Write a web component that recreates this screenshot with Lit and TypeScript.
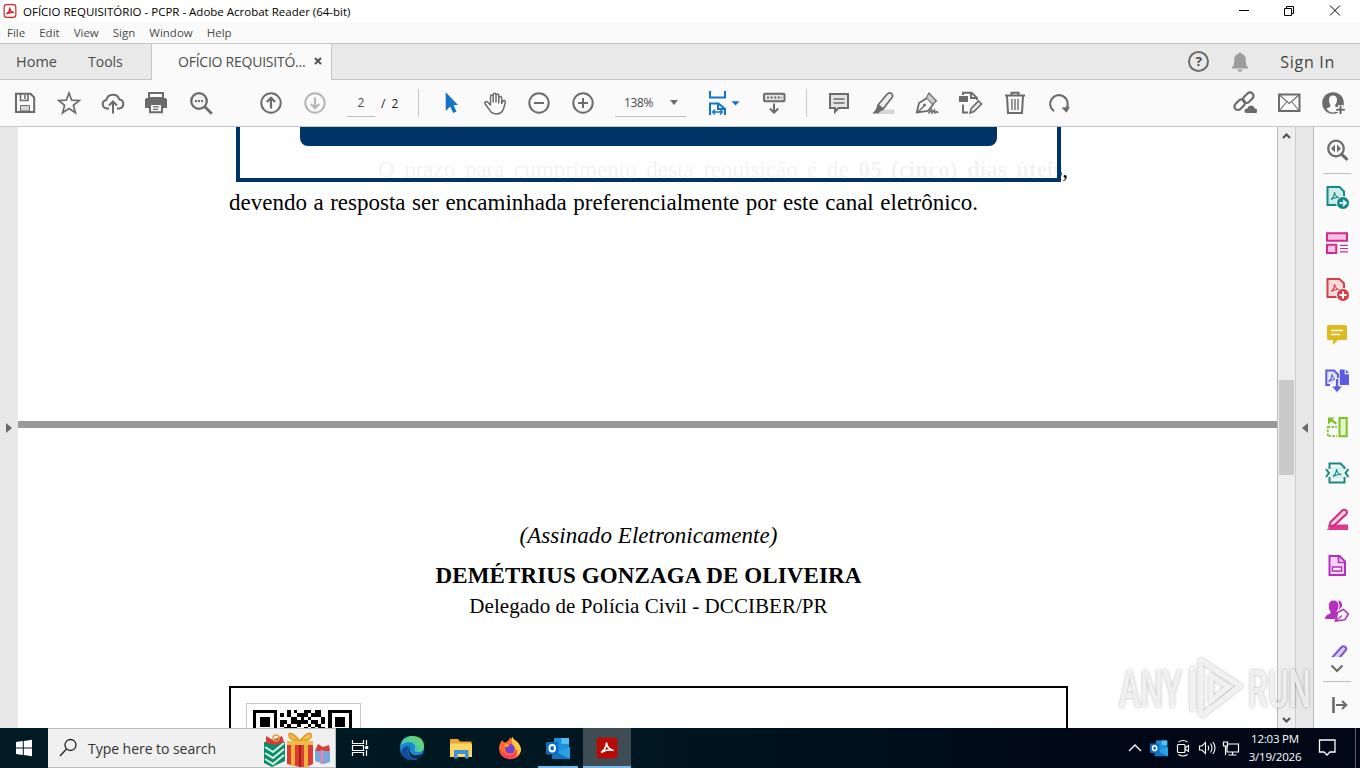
import { LitElement, html, svg, css, SVGTemplateResult } from 'lit';
import { customElement, property } from 'lit/decorators.js';

const G = '#6b6b6b';
const BLUE = '#1473c8';

const pdfMark = (x: number, y: number, color: string) => svg`
  <path d="M0 7.5C2 6 3.500 2.800 3.500 0c.3 3 2 5 4.800 5.600C5.500 5.200 2.500 6 0 7.500z"
    transform="translate(${x} ${y})" fill="none" stroke=${color} stroke-width="1.1"/>`;

// all glyphs are drawn on a 24x24 grid unless the <x-icon> gives another width
const ICONS: Record<string, SVGTemplateResult> = {
  save: svg`<path d="M3 2.800h14.500l3.700 3.700v14.400H3z" fill="none" stroke=${G} stroke-width="2"/>
    <path d="M7.500 3v6.500h7.500V3" fill="none" stroke=${G} stroke-width="1.6"/><path d="M12 4v4" stroke=${G} stroke-width="1.6"/>
    <path d="M7.500 20v-5.500h9V20z" fill="#d8d8d8" stroke=${G} stroke-width="1"/>`,
  star: svg`<path d="M12 2l2.700 7.200 7.700.3-6 4.800 2 7.500-6.400-4.300-6.400 4.300 2-7.500-6-4.800 7.700-.3z" fill="none" stroke=${G} stroke-width="1.7"/>`,
  cloud: svg`<path d="M8 17.500H5.500A4.300 4.300 0 0 1 5.300 9a6.800 6.800 0 0 1 13.100-.4A4.500 4.500 0 0 1 18.500 17.500H16" fill="none" stroke=${G} stroke-width="2"/>
    <path d="M12 22.500V11M8 14.500l4-4 4 4" fill="none" stroke=${G} stroke-width="2"/>`,
  print: svg`<path d="M4 2h14v5H4z" fill="#fafafa" stroke=${G} stroke-width="2"/>
    <path d="M0 8.500q0-1.500 1.500-1.500h19q1.500 0 1.500 1.500V17H0z" fill=${G}/>
    <path d="M5 13h12v8.300H5z" fill="#fafafa" stroke=${G} stroke-width="2"/><path d="M8 15.800h6M8 18.400h5" stroke=${G} stroke-width="1.2"/>`,
  search: svg`<circle cx="10" cy="10" r="7.800" fill="#f2f2f2" stroke=${G} stroke-width="2.3"/><path d="M15.800 15.800l7 7" stroke=${G} stroke-width="2.800"/>
    <path d="M6 9h2v2H6zM9 9h2v2H9zM12 9h2v2h-2z" fill=${G}/>`,
  up: svg`<circle cx="12" cy="12" r="9.700" fill="none" stroke=${G} stroke-width="2"/><path d="M12 17.500V7M7.800 11L12 6.800l4.200 4.200" fill="none" stroke=${G} stroke-width="2.2"/>`,
  down: svg`<circle cx="12" cy="12" r="9.700" fill="none" stroke="#b5b5b5" stroke-width="2"/><path d="M12 6.500V17M7.800 13l4.200 4.200 4.200-4.200" fill="none" stroke="#b5b5b5" stroke-width="2.2"/>`,
  cursor: svg`<path d="M6.700 1.300L19 14h-4.500l3 6.400-3.300 1.500-3-6.300-4.500 4.300z" fill=${BLUE}/>`,
  hand: svg`<path d="M7.500 14V5.500c0-2 2.700-2 2.700 0V11V3.800c0-2 2.800-2 2.800 0V11V4.500c0-2 2.800-2 2.800 0V12V7c0-1.900 2.900-1.900 2.900 0v5.500l.9-2c1.200-1.800 3.200-1 2.700 1L20.800 17c-1 4-3.800 6-7.600 6-4.200 0-5.700-2-7.200-4.800L2 12.800c-.9-1.700 1.300-3 2.800-1.500z" fill="#fafafa" stroke=${G} stroke-width="1.5" stroke-linejoin="round"/>`,
  minus: svg`<circle cx="12" cy="12" r="9.700" fill="none" stroke=${G} stroke-width="2"/><path d="M7 12h10" stroke=${G} stroke-width="2"/>`,
  plus: svg`<circle cx="12" cy="12" r="9.700" fill="none" stroke=${G} stroke-width="2"/><path d="M7 12h10M12 7v10" stroke=${G} stroke-width="2"/>`,
  fit: svg`<path d="M5 0v6.500h15V0M5 24V12.500h8.500L20 18v6M13 12.500V18h6" fill="none" stroke=${BLUE} stroke-width="2"/>
    <path d="M7.500 21h10M10 18.500L7.500 21l2.500 2.500M15 18.500l2.500 2.500-2.500 2.500" fill="none" stroke=${BLUE} stroke-width="1.3"/>
    <path d="M26.500 10.300h8l-4 4.200z" fill=${BLUE}/>`,
  keys: svg`<rect x="2" y="2.800" width="20.500" height="7.400" rx="1" fill="#e2e2e2" stroke=${G} stroke-width="2"/>
    <path d="M5 6.500h15" stroke=${G} stroke-width="2" stroke-dasharray="2 1.600"/><path d="M12 12.500v9M7.800 17.500l4.200 4.200 4.200-4.200" fill="none" stroke=${G} stroke-width="2"/>`,
  comment: svg`<path d="M3 3h18v14h-9.500L8 20.800V17H3z" fill="#e4e4e4" stroke=${G} stroke-width="2"/><path d="M6.500 8h11M6.500 12h11" stroke=${G} stroke-width="1.500"/>`,
  marker: svg`<path d="M10 18.500h13.500V23H7z" fill="#d6d6d6"/><path d="M7 14L16 3.300q2.500-2.500 4.500-.7t.3 4.200L12 18z" fill="#ececec" stroke=${G} stroke-width="1.700"/>
    <path d="M6.500 14l6 5-3.500 1.500-1.500 2H1.300l3.500-4z" fill=${G}/>`,
  pen: svg`<path d="M1.800 21.500L4 12l8-5 6 6.500-5 6.500z" fill="none" stroke=${G} stroke-width="1.800"/>
    <path d="M11.500 6.500L14 2l7.500 8-3.500 3" fill="#ccc" stroke=${G} stroke-width="1.200"/><path d="M2 22l7-7" stroke=${G} stroke-width="1.500"/><circle cx="9.500" cy="14" r="1.500" fill=${G}/>
    <path d="M13.500 22.500l3-4 .5 3.500 2.500-3 .5 3 2-1.500 1 1.500" fill="none" stroke=${G} stroke-width="1.500"/>`,
  convert: svg`<path d="M0 5h9v6H0z" fill=${G}/><path d="M4 4V1.800h8.500l5.500 5V9M12 2v5h5.500M4 13.500v8h5" fill="none" stroke=${G} stroke-width="1.900"/>
    <path d="M11 22l1.200-4.500L19.500 10l3 3-7.500 7.500z" fill="#e6e6e6" stroke=${G} stroke-width="1.600"/>`,
  trash: svg`<path d="M2 4.500h20M8.500 4V1.800h7V4M4 5l1 17h14l1-17" fill="none" stroke=${G} stroke-width="2"/><path d="M9 8v11M12 8v11M15 8v11" stroke=${G} stroke-width="1.400"/>`,
  rotate: svg`<path d="M7 20.200A8.800 8.800 0 1 1 19.500 17.500" fill="none" stroke=${G} stroke-width="2.100"/><path d="M14.500 16.500l8.500-.5-3.500 5.800z" fill=${G}/>`,
  link: svg`<g fill="none" stroke=${G} stroke-width="2.200"><rect x="0" y="0" width="12" height="7" rx="3.500" transform="translate(8.500 8.500) rotate(-45)"/>
    <rect x="0" y="0" width="12" height="7" rx="3.500" transform="translate(0 15.500) rotate(-45)"/></g>
    <path d="M13 22.500q-2.500-.5-2-3t3-2.500q1.500-3.500 4.500-3t3.500 3q3 .5 3 3t-2.500 2.500z" fill=${G} stroke="#fafafa" stroke-width="1"/>`,
  mail: svg`<rect x="2" y="3.500" width="20.500" height="16.500" fill="none" stroke=${G} stroke-width="2"/><path d="M2.500 4l9.700 8.500L22 4M2.500 19.500l7-8.500M22 19.500L15 11" fill="none" stroke=${G} stroke-width="1.100"/>`,
  user: svg`<circle cx="12" cy="12" r="10.800" fill=${G}/><path d="M12 4.500q4 0 4 4.500 0 3-1.800 4.800-.3 2 1 2.500l3 1.300q-2.500 4-6.500 4t-6.300-4l3-1.300q1.300-.5 1-2.500Q8 12 8 9q0-4.500 4-4.500z" fill="#fafafa"/>
    <path d="M19.500 14v9M15 18.500h9" stroke="#fafafa" stroke-width="5"/><path d="M19.500 14.500v8.500M15.200 18.800h8.600" stroke=${G} stroke-width="2"/>`,
  bell: svg`<path d="M12 2.200q1.500 0 1.500 1.500 4 1 4.200 5.300l.3 5.500 2.500 4H3.500l2.500-4 .3-5.500q.2-4.300 4.200-5.300 0-1.500 1.500-1.500zM9.500 19.500h5l-1 2h-3z" fill="#9d9d9d"/>`,

  find: svg`<circle cx="11" cy="10.500" r="7.800" fill="none" stroke=${G} stroke-width="2.300"/><path d="M16.800 16.300l5.700 5.500" stroke=${G} stroke-width="3"/><path d="M10 6.500v8l-4-4zM12 6.500v8l4-4z" fill=${G}/>`,
  exportPdf: svg`<path d="M2.500 2h12L19 6.500V20H2.500z" fill="#cfeceb" stroke="#108a86" stroke-width="2"/>${pdfMark(6, 7, '#108a86')}
    <circle cx="18" cy="18" r="6.500" fill="#108a86" stroke="#fafafa"/><path d="M14.500 18h6M18 15.200l3 2.800-3 2.800" fill="none" stroke="#fff" stroke-width="1.700"/>`,
  organize: svg`<path d="M2 2.300h20v7.500H2zM2 13.800h9.300v8.300H2z" fill="#fbc3e2" stroke="#ce2d8e" stroke-width="2"/><path d="M15 14.300h8M15 17.500h8M15 20.800h8" stroke="#ce2d8e" stroke-width="1.200"/>`,
  createPdf: svg`<path d="M2.500 2h12L19 6.500V20H2.500z" fill="#fbdcdc" stroke="#d5404c" stroke-width="2"/>${pdfMark(6, 7, '#d5404c')}
    <circle cx="18" cy="18" r="6.500" fill="#d5404c" stroke="#fafafa"/><path d="M14.500 18h7M18 14.500v7" stroke="#fff" stroke-width="2"/>`,
  note: svg`<path d="M3.500 2h17q1.500 0 1.500 1.500v12q0 1.500-1.500 1.500H13l-5 5V17H3.500Q2 17 2 15.500v-12Q2 2 3.500 2z" fill="#dfb920"/><path d="M6 7.500h12M6 11.500h9" stroke="#fff" stroke-width="1.700"/>`,
  combine: svg`<path d="M5 16H1.300V1.500H9L13 5.500V12" fill="#e5e5fb" stroke="#5c5ce0" stroke-width="2"/>${pdfMark(3.5, 5, '#5c5ce0')}
    <path d="M14.700.5h5v4.800H24V16h-9.300zM20.800.5L24 4h-3.200z" fill="#5c5ce0"/><path d="M10.300 9.500h3.500v7.500h4l-5.800 6.700L6.200 17h4.100z" fill="#5c5ce0" stroke="#fafafa" stroke-width="1"/>`,
  pages: svg`<path d="M14.500 3h7.200v18.200h-7.200z" fill="#e3f5cc" stroke="#7cc221" stroke-width="2"/><path d="M2.800 11v10.200H12M2.800 11.800H12" fill="none" stroke="#7cc221" stroke-width="1.700" stroke-dasharray="2.500 1.200"/>
    <path d="M3 2.500h6.500L7.500 4.500l4.500 3.300-1.300 1.800L6 6.400 3 9.500z" fill="#7cc221"/>`,
  compress: svg`<path d="M6 6h12.500v12H6z" fill="#d8f2ef"/><path d="M4.500 8V2.500h11l4 4V8M4.500 16v5.500h15V16" fill="none" stroke="#15897f" stroke-width="2"/>${pdfMark(8, 8, '#15897f')}
    <path d="M1 8l3 4-3 4M23.500 8l-3 4 3 4" fill="none" stroke="#15897f" stroke-width="2"/>`,
  redact: svg`<path d="M8 17.500h15V23H1.500z" fill="#e0388c"/><path d="M5.500 15L17.500 3.200q2-1.200 3.700.3t0 3.700L9 18.500l-4.800 1z" fill="#f8cfe2" stroke="#ce2d7c" stroke-width="2"/>`,
  form: svg`<path d="M4.500 3h10l5.500 5.500V22H4.500z" fill="#f8d3f6" stroke="#b130bd" stroke-width="2"/><path d="M13.500 3v6.500H20" fill="none" stroke="#b130bd" stroke-width="1.700"/><rect x="7.500" y="14" width="9" height="4" fill="#fff" stroke="#b130bd" stroke-width="1.500"/>`,
  sign: svg`<path d="M8.500 1.500q5 0 5 5.500 0 3.500-2 5.300l1 2.200L10 20H0q0-4 5-5.200Q6 14 5.200 12 3.800 10 3.800 7q0-5.500 4.700-5.500zM13 1.500q4.500 0 4 6l-3 3.800q1.500-4-.2-8z" fill="#b32fbd"/>
    <path d="M10.500 22l2-8.500 6-3 4.800 4.500-3.500 5.800z" fill="#fafafa" stroke="#b32fbd" stroke-width="1.600"/><path d="M11 21.500l6-5" stroke="#b32fbd" stroke-width="1.300"/>`,
  measure: svg`<path d="M5 15L16.500 2q2-1.500 3.800 0t.3 3.500L10 18z" fill="#dacaf5" stroke="#7d54c7" stroke-width="2"/>`,
  chevron: svg`<path d="M6.500 8.500l5.500 5.500 5.500-5.500" fill="none" stroke=${G} stroke-width="2"/>`,
  collapse: svg`<path d="M8.500 4v16" stroke=${G} stroke-width="2.600"/><path d="M11 12h10M17 8l4.300 4-4.300 4" fill="none" stroke=${G} stroke-width="2"/>`,

  windows: svg`<path d="M4 6l6.800-1v6.500H4zM11.800 4.900L20 3.700v7.800h-8.200zM4 12.500h6.800V19L4 18zM11.800 12.500H20v7.800l-8.200-1.200z" fill="#fff"/>`,
  lens: svg`<circle cx="14.500" cy="9" r="5.500" fill="none" stroke="#222" stroke-width="1.300"/><path d="M10.500 13L4 20" stroke="#222" stroke-width="1.300"/>`,
  gifts: svg`<path d="M1 11h21v19L9 36l-8-4z" fill="#0d8a6c"/><path d="M2 16l8 5 11-9M2 22l8 5 11-9M2 28l8 5 11-9" fill="none" stroke="#d9f5e4" stroke-width="2"/>
    <path d="M3 12l0-7 7 4 9-4 2 6-9 3z" fill="#d63a3a"/><circle cx="13" cy="7" r="3" fill="none" stroke="#e0a13c" stroke-width="1.500"/>
    <path d="M24 12h26v21l-9 4-17-4z" fill="#da3b32"/><path d="M30 12v23M43 12v24" stroke="#f0b13d" stroke-width="4"/><path d="M37 14v22" stroke="#a71f24" stroke-width="2"/>
    <path d="M37 10Q26-1 26 4t11 6Q47-1 48 4t-11 6" fill="#f8cd5d" stroke="#e3a02e" stroke-width="2"/><path d="M24 10h26v4H24z" fill="#eebb49"/>
    <path d="M52 20h15v11l-6 2-9-3z" fill="#74a9dd"/><path d="M52 20l3-7 5 3 6-2 1 6z" fill="#dc3d38"/><path d="M59 19v14" stroke="#d889b8" stroke-width="3"/>`,
  taskview: svg`<path d="M4.500 4v3.500h11V4M4.500 20v-3.500h11V20" fill="none" stroke="#fff" stroke-width="1.200"/><path d="M4.500 9.500h11v5h-11zM18.500 4v5M18.500 14v6" fill="none" stroke="#fff" stroke-width="1.200"/><path d="M17.200 10h3v3h-3z" fill="#fff"/>`,
  edge: svg`<circle cx="12" cy="12" r="12" fill="#1b86d1"/><path d="M.2 11Q1.500 0 12 0t12 10q.2 6-6.500 6-3.500-.3-3-2.500 1-1.500 0-4.500Q11 5 6 6.500.8 8.500.2 11z" fill="#43c8b4"/>
    <path d="M12 0q12 0 12 10q.2 6-6.500 6 3.500-4-1-8Q12 4 5 5 8 0 12 0z" fill="#6bd66b" opacity=".75"/>
    <path d="M9 10q-4 8 3 12 4 2 9-2-5 7-13 3.300Q0 20 2 14q2-4.500 7-4z" fill="#0d4da0"/><path d="M10 10.500q-2 7 4 8.800 4 .8 8-1.500-1 3-4 4.500-7 1-9-4.500-1.500-4 1-7.300z" fill="#031d33"/>`,
  folder: svg`<path d="M1 3h8l2 2.500h11.500V21H1z" fill="#e9a92e"/><path d="M1 7.500h22V21H1z" fill="#fbd766"/><path d="M5 14h14.500v8.500h-3.500V18H8.500v4.500H5z" fill="#3b93d3"/>`,
  firefox: svg`<path d="M12 1.500q2.500 1 4 4.500l2-1.500q5.500 5 5 10Q21.500 23 12 23.200 1.500 22.500 1 12.500 1.500 6.500 4.500 4q.5 2 2 2.500Q10 6.500 12 1.500z" fill="#ff6b2c"/>
    <path d="M14 .5q1 2 4 4.500 5.500 5 4.800 10-2 5-6 5.500 3-5-1-10-3-4-1.800-10z" fill="#ffc93c"/><path d="M1.500 12q4 8 10.500 7.500 6-1 6.500-6.500 2 5-1.500 8-5 3.200-10 .6-5-3.100-5.500-9.600z" fill="#f43d63"/>
    <circle cx="12" cy="12.800" r="4.800" fill="#7542d4"/><path d="M5.500 9q3-2 6.500 0-2 2.500-4.500 2z" fill="#ff9b36"/>`,
  outlook: svg`<path d="M8 2h15v13H8z" fill="#1d91dc"/><path d="M15.500 2H23v6h-7.500z" fill="#53c3f3"/><path d="M6 11l9 5 9-5v12H6z" fill="#1373c4"/><path d="M24 11v12L10 16z" fill="#2ba0e3"/>
    <rect x="0" y="6" width="12.500" height="12.500" rx="1.200" fill="#0f6cbd"/><ellipse cx="6.200" cy="12.200" rx="2.800" ry="3.200" fill="none" stroke="#fff" stroke-width="2"/>`,
  acrobat: svg`<rect x="1.500" y="1.500" width="21" height="21" rx="3.500" fill="#b90b06"/><path d="M6 16.500C9 15 11.800 10 11.500 6.500c0 4 3 7.500 7 7.800-4-.8-9 .2-12.500 2.200z" fill="none" stroke="#fff" stroke-width="1.700"/>`,
  acroTitle: svg`<rect x="2" y="1" width="20" height="22" rx="4" fill="#fff" stroke="#d4212a" stroke-width="2"/><path d="M6 17C9 15 12 10 11.500 6c0 4.500 3 8.500 7 8.300C14.500 13.500 9.500 15 6 17z" fill="none" stroke="#d4212a" stroke-width="2.400"/>`,
  trayUp: svg`<path d="M6 15l6-6 6 6" fill="none" stroke="#fff" stroke-width="1.300"/>`,
  meet: svg`<rect x="6.500" y="8.500" width="7.500" height="8" rx="1" fill="none" stroke="#fff" stroke-width="1.200"/><path d="M14 12l3.500-2.500v6L14 13M7.500 6q4.500-3 9 0M7.500 18.500q4.500 3 9 0" fill="none" stroke="#fff" stroke-width="1.100"/>`,
  speaker: svg`<path d="M4.500 10H7l3.500-3.500v11L7 14H4.500z" fill="none" stroke="#fff" stroke-width="1.100"/><path d="M13 9.500q1.500 2.500 0 5M15.500 7.500q3 4.500 0 9M18 6q4 6 0 12" fill="none" stroke="#fff" stroke-width="1.100"/>`,
  network: svg`<path d="M8 8h11.500v8H8zM13.500 16v3M9.500 19h8" fill="none" stroke="#fff" stroke-width="1.200"/><path d="M4.500 6h4v4h-4zM6.500 10v9" fill="#000a18" stroke="#fff" stroke-width="1.200"/>`,
  action: svg`<path d="M4.500 4h15.500v12h-5l-3 3-3-3H4.500z" fill="none" stroke="#fff" stroke-width="1.300"/>`,
};

@customElement('x-icon')
export class XIcon extends LitElement {
  static styles = css`
    :host {
      display: inline-flex;
      flex: none;
    }
  `;

  @property() name = '';
  @property({ type: Number }) w = 24;
  @property({ type: Number }) h = 24;
  @property() box = '';

  render() {
    return html`<svg width=${this.w} height=${this.h} viewBox=${this.box || `0 0 24 24`}>${ICONS[this.name]}</svg>`;
  }
}

// visible rows of the validation code, one character per module
const QR_ROWS = [
  '11111110' + '0010100110110' + '01111111',
  '10000010' + '1010011101110' + '01000001',
  '10111010' + '0001101010001' + '01011101',
  '10111010' + '1101111101101' + '01011101',
  '10111010' + '1010010010110' + '01011101',
  '10000010' + '0111100101011' + '01000001',
];

@customElement('app-root')
export class AppRoot extends LitElement {
  static styles = css`
    :host {
      display: flex;
      flex-direction: column;
      width: 1360px;
      height: 768px;
      overflow: hidden;
      position: relative;
      background: #fff;
      font-family: 'Open Sans', 'Noto Sans', sans-serif;
      color: #4b4b4b;
      white-space: nowrap;
    }

    * {
      box-sizing: border-box;
    }

    .titlebar {
      display: flex;
      align-items: center;
      height: 22px;
      padding-left: 3px;
      font-size: 11.5px;
      color: #000;
    }

    .title {
      margin-left: 6px;
    }

    .window-buttons {
      display: flex;
      margin-left: auto;
    }

    .window-buttons svg {
      width: 45px;
      height: 22px;
    }

    .menubar {
      display: flex;
      align-items: center;
      gap: 14px;
      height: 21px;
      padding-left: 7px;
      background: #fafafa;
      font-size: 11.5px;
    }

    .tabs {
      display: flex;
      align-items: center;
      height: 37px;
      background: #e9e9e9;
      border-top: 1px solid #c6c6c6;
      border-bottom: 1px solid #c6c6c6;
      font-size: 14px;
    }

    .home {
      margin-left: 16px;
      width: 72px;
      font-size: 14.5px;
    }

    .tools {
      width: 63px;
    }

    .tab {
      display: flex;
      align-items: center;
      width: 181px;
      height: 36px;
      margin-bottom: -1px;
      padding: 0 0 2px 26px;
      background: #fafafa;
      border-left: 1px solid #c6c6c6;
      border-right: 1px solid #c6c6c6;
    }

    .tab-name {
      letter-spacing: -0.24px;
      width: 136px;
    }

    .account {
      display: flex;
      align-items: center;
      margin-left: auto;
      margin-right: 25px;
    }

    .help {
      width: 21px;
      height: 21px;
      border: 2px solid #6b6b6b;
      border-radius: 50%;
      font-size: 13px;
      font-weight: 700;
      line-height: 17px;
      text-align: center;
    }

    .bell {
      margin: 0 28px 0 19px;
    }

    .signin {
      font-size: 16px;
      letter-spacing: 0.7px;
      color: #444;
    }

    .toolbar {
      display: flex;
      align-items: center;
      height: 47px;
      padding: 0 5px 0 3px;
      background: #fafafa;
      border-bottom: 1px solid #c6c6c6;
      font-size: 12px;
    }

    .group {
      display: flex;
    }

    .group x-icon {
      width: 44px;
      justify-content: center;
    }

    .paging {
      margin-left: 26px;
    }

    .field {
      height: 28px;
      line-height: 27px;
      border-bottom: 1px solid #bdbdbd;
    }

    .page {
      width: 28px;
      margin-left: 10px;
      text-align: center;
    }

    .total {
      width: 43px;
      padding-left: 6px;
      word-spacing: 3px;
      color: #222;
    }

    .rule {
      width: 1px;
      height: 28px;
      margin-right: 10px;
      background: #c9c9c9;
    }

    .zoom {
      display: flex;
      align-items: center;
      width: 71px;
      margin: 0 9px 0 10px;
      padding-left: 9px;
    }

    .percent {
      width: 46px;
      letter-spacing: -0.4px;
    }

    .caret {
      border: 4px solid transparent;
      border-top: 5px solid #6b6b6b;
      border-bottom: 0;
    }

    .fit {
      width: 57px;
      padding-left: 10px;
    }

    .keys {
      margin-right: 10px;
    }

    .share {
      margin-left: auto;
    }

    .workspace {
      display: flex;
      height: 601px;
    }

    .gutter {
      display: flex;
      flex: none;
      align-items: center;
      justify-content: center;
      width: 18px;
      background: #e8e8e8;
    }

    .narrow {
      width: 17px;
    }

    .open-right {
      border: 5px solid transparent;
      border-left: 6px solid #6b6b6b;
      border-right: 0;
    }

    .open-left {
      border: 5px solid transparent;
      border-right: 6px solid #6b6b6b;
      border-left: 0;
    }

    .document {
      flex: none;
      width: 1259px;
      overflow: hidden;
      font-family: 'Liberation Serif', serif;
      color: #000;
    }

    .sheet-one {
      position: relative;
      height: 294px;
      padding: 26px 0 0 211px;
      font-size: 23px;
      line-height: 33px;
    }

    .first-line {
      width: 690px;
      margin-left: 149px;
      text-align-last: justify;
    }

    .second-line {
      width: 749px;
      text-align-last: justify;
    }

    .frame {
      position: absolute;
      top: 0;
      left: 218px;
      width: 825px;
      height: 55px;
      padding-left: 60px;
      background: rgba(255, 255, 255, 0.95);
      border: 4px solid #003366;
      border-top: 0;
    }

    .banner {
      width: 697px;
      height: 19px;
      background: #003366;
      border-radius: 0 0 8px 8px;
    }

    .page-gap {
      height: 7px;
      background: #999;
    }

    .sheet-two {
      display: flex;
      flex-direction: column;
      align-items: center;
      padding: 92px 0 0 2px;
    }

    .signed {
      font-size: 23px;
      font-style: italic;
      line-height: 32px;
      letter-spacing: 0.06px;
    }

    .name {
      margin-top: 8px;
      font-size: 23px;
      font-weight: 700;
      line-height: 32px;
      letter-spacing: 0.13px;
    }

    .role {
      font-size: 21px;
      line-height: 28px;
      letter-spacing: 0.05px;
    }

    .validation {
      width: 839px;
      height: 80px;
      margin-top: 66px;
      padding: 15px;
      border: 2px solid #000;
    }

    .qr {
      width: 115px;
      height: 60px;
      padding: 6px;
      border: 1px solid #c8c8c8;
    }

    .scrollbar {
      display: flex;
      flex: none;
      flex-direction: column;
      justify-content: space-between;
      position: relative;
      width: 19px;
      padding: 4px 1px 3px;
      background: #eee;
      border-left: 1px solid #bbb;
      border-right: 1px solid #ccc;
    }

    .thumb {
      position: absolute;
      top: 253px;
      left: 1px;
      width: 15px;
      height: 95px;
      background: #c9c9c9;
    }

    .side {
      display: flex;
      flex: none;
      flex-direction: column;
      align-items: center;
      width: 47px;
      background: #fafafa;
      border-left: 1px solid #bbb;
    }

    .tool {
      display: flex;
      align-items: center;
      height: 46px;
    }

    .divider {
      flex: none;
      width: 28px;
      height: 1px;
      background: #bdbdbd;
    }

    .cut {
      height: 23px;
      padding-top: 11px;
      align-items: flex-start;
      overflow: hidden;
    }

    .more {
      height: 24px;
    }

    .taskbar {
      display: flex;
      height: 40px;
      background: linear-gradient(90deg, #011a24 0%, #001722 45%, #000817 80%);
      color: #fff;
    }

    .start {
      display: flex;
      align-items: center;
      justify-content: center;
      width: 48px;
    }

    .searchbox {
      display: flex;
      align-items: center;
      width: 288px;
      padding-left: 8px;
      background: #f0f0f0;
      border: 1px solid #b9bcbe;
      border-left: 0;
      font-size: 14px;
      color: #333;
    }

    .hint {
      width: 175px;
      margin-left: 8px;
      letter-spacing: -0.04px;
    }

    .app {
      display: flex;
      align-items: center;
      justify-content: center;
      width: 49px;
      border-bottom: 2px solid transparent;
      padding-top: 1px;
    }

    .views {
      width: 48px;
      margin-right: 3px;
    }

    .running {
      width: 40px;
      margin: 0 5px 0 4px;
      border-bottom-color: #76b9ed;
    }

    .active {
      width: 48px;
      background: #404c54;
      border-bottom-color: #76b9ed;
    }

    .tray {
      display: flex;
      align-items: center;
      margin-left: auto;
    }

    .clock {
      width: 64px;
      font-size: 11.5px;
      line-height: 18px;
      letter-spacing: -0.2px;
      text-align: center;
    }

    .action {
      margin: 0 16px 0 8px;
    }

    .peek {
      width: 5px;
      height: 40px;
      border-left: 1px solid #58606b;
    }

    .watermark {
      position: absolute;
      left: 1112px;
      top: 650px;
      filter: drop-shadow(0 0 1.5px rgba(0, 0, 0, 0.4));
    }

    .watermark text {
      font-family: Roboto, sans-serif;
      font-size: 52px;
      font-weight: 500;
    }
  `;

  private tools = [
    'exportPdf', 'organize', 'createPdf', 'note', 'combine',
    'pages', 'compress', 'redact', 'form', 'sign',
  ];

  private icons(names: string[]) {
    return names.map(name => html`<x-icon name=${name}></x-icon>`);
  }

  private renderQr() {
    const size = 3.42;
    return svg`${QR_ROWS.map((row, y) => [...row].map((cell, x) => cell === '1'
      ? svg`<rect x=${x * size} y=${y * size} width=${size} height=${size}/>` : ''))}`;
  }

  private renderHeader() {
    return html`
      <div class="titlebar">
        <x-icon name="acroTitle" w="14" h="16"></x-icon>
        <span class="title">OFÍCIO REQUISITÓRIO - PCPR - Adobe Acrobat Reader (64-bit)</span>
        <div class="window-buttons">
          <svg viewBox="0 0 45 22"><path d="M14 10.500h10" stroke="#000"/></svg>
          <svg viewBox="0 0 45 22"><path d="M14.500 8.500h7v7h-7zM16.500 8V6.500h7v7H22" fill="none" stroke="#000"/></svg>
          <svg viewBox="0 0 45 22"><path d="M15 5.500l10 10M25 5.500l-10 10" stroke="#000"/></svg>
        </div>
      </div>
      <div class="menubar">
        ${['File', 'Edit', 'View', 'Sign', 'Window', 'Help'].map(item => html`<span>${item}</span>`)}
      </div>
      <div class="tabs">
        <span class="home">Home</span>
        <span class="tools">Tools</span>
        <div class="tab">
          <span class="tab-name">OFÍCIO REQUISITÓ...</span>
          <svg width="8" height="8"><path d="M1 1l6 6M7 1l-6 6" stroke="#555" stroke-width="2"/></svg>
        </div>
        <div class="account">
          <span class="help">?</span>
          <x-icon class="bell" name="bell"></x-icon>
          <span class="signin">Sign In</span>
        </div>
      </div>
    `;
  }

  private renderToolbar() {
    return html`
      <div class="toolbar">
        <div class="group">${this.icons(['save', 'star', 'cloud', 'print', 'search'])}</div>
        <div class="group paging">${this.icons(['up', 'down'])}</div>
        <span class="field page">2</span>
        <span class="total">/ 2</span>
        <span class="rule"></span>
        <div class="group">${this.icons(['cursor', 'hand', 'minus', 'plus'])}</div>
        <div class="field zoom"><span class="percent">138%</span><span class="caret"></span></div>
        <x-icon class="fit" name="fit" w="36" box="0 0 36 24"></x-icon>
        <div class="group keys">${this.icons(['keys'])}</div>
        <span class="rule"></span>
        <div class="group">${this.icons(['comment', 'marker', 'pen', 'convert', 'trash', 'rotate'])}</div>
        <div class="group share">${this.icons(['link', 'mail', 'user'])}</div>
      </div>
    `;
  }

  private renderDocument() {
    return html`
      <div class="document">
        <div class="sheet-one">
          <div class="first-line">O prazo para cumprimento desta requisição é de <b>05 (cinco) dias úteis</b>,</div>
          <div class="second-line">devendo a resposta ser encaminhada preferencialmente por este canal eletrônico.</div>
          <div class="frame"><div class="banner"></div></div>
        </div>
        <div class="page-gap"></div>
        <div class="sheet-two">
          <span class="signed">(Assinado Eletronicamente)</span>
          <span class="name">DEMÉTRIUS GONZAGA DE OLIVEIRA</span>
          <span class="role">Delegado de Polícia Civil - DCCIBER/PR</span>
          <div class="validation">
            <div class="qr"><svg width="100" height="30" shape-rendering="crispEdges">${this.renderQr()}</svg></div>
          </div>
        </div>
      </div>
    `;
  }

  private renderSide() {
    return html`
      <div class="side">
        <div class="tool"><x-icon name="find"></x-icon></div>
        <div class="divider"></div>
        ${this.tools.map(name => html`<div class="tool"><x-icon name=${name}></x-icon></div>`)}
        <div class="tool cut"><x-icon name="measure"></x-icon></div>
        <div class="tool more"><x-icon name="chevron"></x-icon></div>
        <div class="divider"></div>
        <div class="tool"><x-icon name="collapse"></x-icon></div>
      </div>
    `;
  }

  private renderTaskbar() {
    return html`
      <div class="taskbar">
        <div class="start"><x-icon name="windows"></x-icon></div>
        <div class="searchbox">
          <x-icon name="lens"></x-icon>
          <span class="hint">Type here to search</span>
          <x-icon name="gifts" w="70" h="38" box="0 -2 70 38"></x-icon>
        </div>
        <div class="app views"><x-icon name="taskview"></x-icon></div>
        <div class="app"><x-icon name="edge"></x-icon></div>
        <div class="app"><x-icon name="folder"></x-icon></div>
        <div class="app"><x-icon name="firefox"></x-icon></div>
        <div class="app running"><x-icon name="outlook"></x-icon></div>
        <div class="app active"><x-icon name="acrobat"></x-icon></div>
        <div class="tray">
          <x-icon name="trayUp"></x-icon>
          <x-icon name="outlook" box="-4 -4 32 32"></x-icon>
          ${this.icons(['meet', 'speaker', 'network'])}
          <div class="clock">12:03 PM<br />3/19/2026</div>
          <x-icon class="action" name="action"></x-icon>
          <span class="peek"></span>
        </div>
      </div>
    `;
  }

  render() {
    return html`
      ${this.renderHeader()}
      ${this.renderToolbar()}
      <div class="workspace">
        <div class="gutter"><span class="open-right"></span></div>
        ${this.renderDocument()}
        <div class="scrollbar">
          <svg width="15" height="10"><path d="M4 7l3.500-3.500L11 7" fill="none" stroke="#505050" stroke-width="2"/></svg>
          <span class="thumb"></span>
          <svg width="15" height="10"><path d="M4 3l3.500 3.500L11 3" fill="none" stroke="#505050" stroke-width="2"/></svg>
        </div>
        <div class="gutter narrow"><span class="open-left"></span></div>
        ${this.renderSide()}
      </div>
      ${this.renderTaskbar()}
      <svg class="watermark" width="230" height="76">
        <g fill="rgba(255,255,255,.75)">
          <text x="7" y="57" textLength="63" lengthAdjust="spacingAndGlyphs">ANY</text>
          <text x="136" y="57" textLength="63" lengthAdjust="spacingAndGlyphs">RUN</text>
        </g>
        <path d="M80.500 17v44M89 66V10.500L128 36 89 66M99 51V26l17 11z" fill="none" stroke="rgba(255,255,255,.8)" stroke-width="5" stroke-linejoin="round"/>
      </svg>
    `;
  }
}

declare global {
  interface HTMLElementTagNameMap {
    'app-root': AppRoot;
    'x-icon': XIcon;
  }
}
